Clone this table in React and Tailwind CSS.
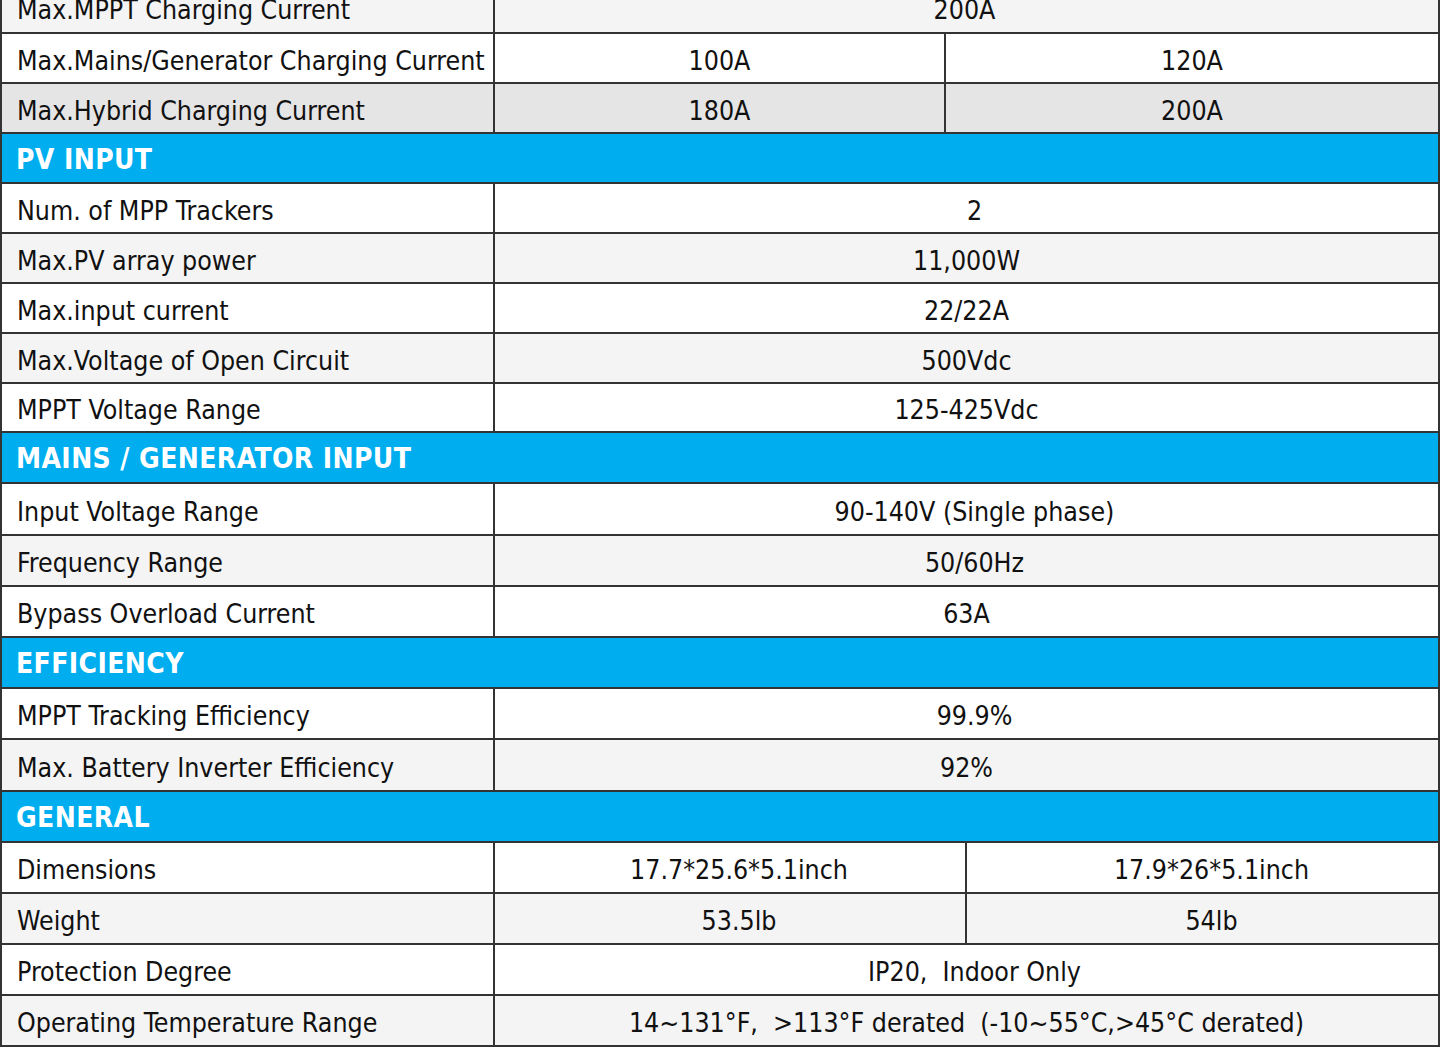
import React from 'react';

const rows = [
  { label: 'Max.MPPT Charging Current', values: ['200A'], bg: 'bg-[#f4f4f4]', h: 'h-[51px]', shift: 'pr-[4px]' },
  { label: 'Max.Mains/Generator Charging Current', split: 'a', values: ['100A', '120A'], bg: 'bg-white', h: 'h-[50px]' },
  { label: 'Max.Hybrid Charging Current', split: 'a', values: ['180A', '200A'], bg: 'bg-[#e6e5e6]', h: 'h-[50px]' },
  { header: 'PV INPUT', h: 'h-[50px]' },
  { label: 'Num. of MPP Trackers', values: ['2'], bg: 'bg-white', h: 'h-[50px]', shift: 'pl-[16px]' },
  { label: 'Max.PV array power', values: ['11,000W'], bg: 'bg-[#f4f4f4]', h: 'h-[50px]' },
  { label: 'Max.input current', values: ['22/22A'], bg: 'bg-white', h: 'h-[50px]' },
  { label: 'Max.Voltage of Open Circuit', values: ['500Vdc'], bg: 'bg-[#f4f4f4]', h: 'h-[50px]' },
  { label: 'MPPT Voltage Range', values: ['125-425Vdc'], bg: 'bg-white', h: 'h-[49px]' },
  { header: 'MAINS / GENERATOR INPUT', h: 'h-[51px]' },
  { label: 'Input Voltage Range', values: ['90-140V (Single phase)'], bg: 'bg-white', h: 'h-[52px]', shift: 'pl-[16px]' },
  { label: 'Frequency Range', values: ['50/60Hz'], bg: 'bg-[#f4f4f4]', h: 'h-[51px]', shift: 'pl-[16px]' },
  { label: 'Bypass Overload Current', values: ['63A'], bg: 'bg-white', h: 'h-[51px]' },
  { header: 'EFFICIENCY', h: 'h-[51px]' },
  { label: 'MPPT Tracking Efficiency', values: ['99.9%'], bg: 'bg-white', h: 'h-[51px]', shift: 'pl-[16px]' },
  { label: 'Max. Battery Inverter Efficiency', values: ['92%'], bg: 'bg-[#f4f4f4]', h: 'h-[52px]' },
  { header: 'GENERAL', h: 'h-[51px]' },
  { label: 'Dimensions', split: 'b', values: ['17.7*25.6*5.1inch', '17.9*26*5.1inch'], bg: 'bg-white', h: 'h-[51px]' },
  { label: 'Weight', split: 'b', values: ['53.5lb', '54lb'], bg: 'bg-[#f4f4f4]', h: 'h-[51px]' },
  { label: 'Protection Degree', values: ['IP20,  Indoor Only'], bg: 'bg-white', h: 'h-[51px]', shift: 'pl-[16px]' },
  { label: 'Operating Temperature Range', values: ['14~131°F,  >113°F derated  (-10~55°C,>45°C derated)'], bg: 'bg-[#f4f4f4]', h: 'h-[51px]' },
];

const font = "font-['Tahoma','DejaVu_Sans_Condensed','DejaVu_Sans',sans-serif]";
const cell = 'flex items-center justify-center pt-[5px] text-[26.5px] text-[#111] whitespace-pre';

function SpecRow({ row }) {
  if (row.header) {
    return (
      <div className={`${row.h} flex items-center bg-[#00aeef] border-b-2 border-[#333] pl-[14px] pt-[3px]`}>
        <span className="text-white font-bold text-[28px] tracking-[0.4px]">{row.header}</span>
      </div>
    );
  }

  return (
    <div className={`${row.h} ${row.bg} flex border-b-2 border-[#333]`}>
      <div className="w-[493px] shrink-0 border-r-2 border-[#333] flex items-center pt-[5px] pl-[15px] text-[26.5px] text-[#111] whitespace-nowrap">
        {row.label}
      </div>
      {row.split === 'a' && (
        <>
          <div className={`w-[451px] shrink-0 border-r-2 border-[#333] ${cell}`}>{row.values[0]}</div>
          <div className={`flex-1 ${cell}`}>{row.values[1]}</div>
        </>
      )}
      {row.split === 'b' && (
        <>
          <div className={`w-[472px] shrink-0 border-r-2 border-[#333] pl-[18px] ${cell}`}>{row.values[0]}</div>
          <div className={`flex-1 pl-[18px] ${cell}`}>{row.values[1]}</div>
        </>
      )}
      {!row.split && (
        <div className={`flex-1 ${cell} ${row.shift || ''}`}>{row.values[0]}</div>
      )}
    </div>
  );
}

export default function App() {
  return (
    <div className={`w-[1440px] h-[1047px] overflow-hidden bg-white ${font}`}>
      <div className="-mt-[17px] border-x-2 border-[#333]">
        {rows.map((row, i) => (
          <SpecRow key={i} row={row} />
        ))}
      </div>
    </div>
  );
}
